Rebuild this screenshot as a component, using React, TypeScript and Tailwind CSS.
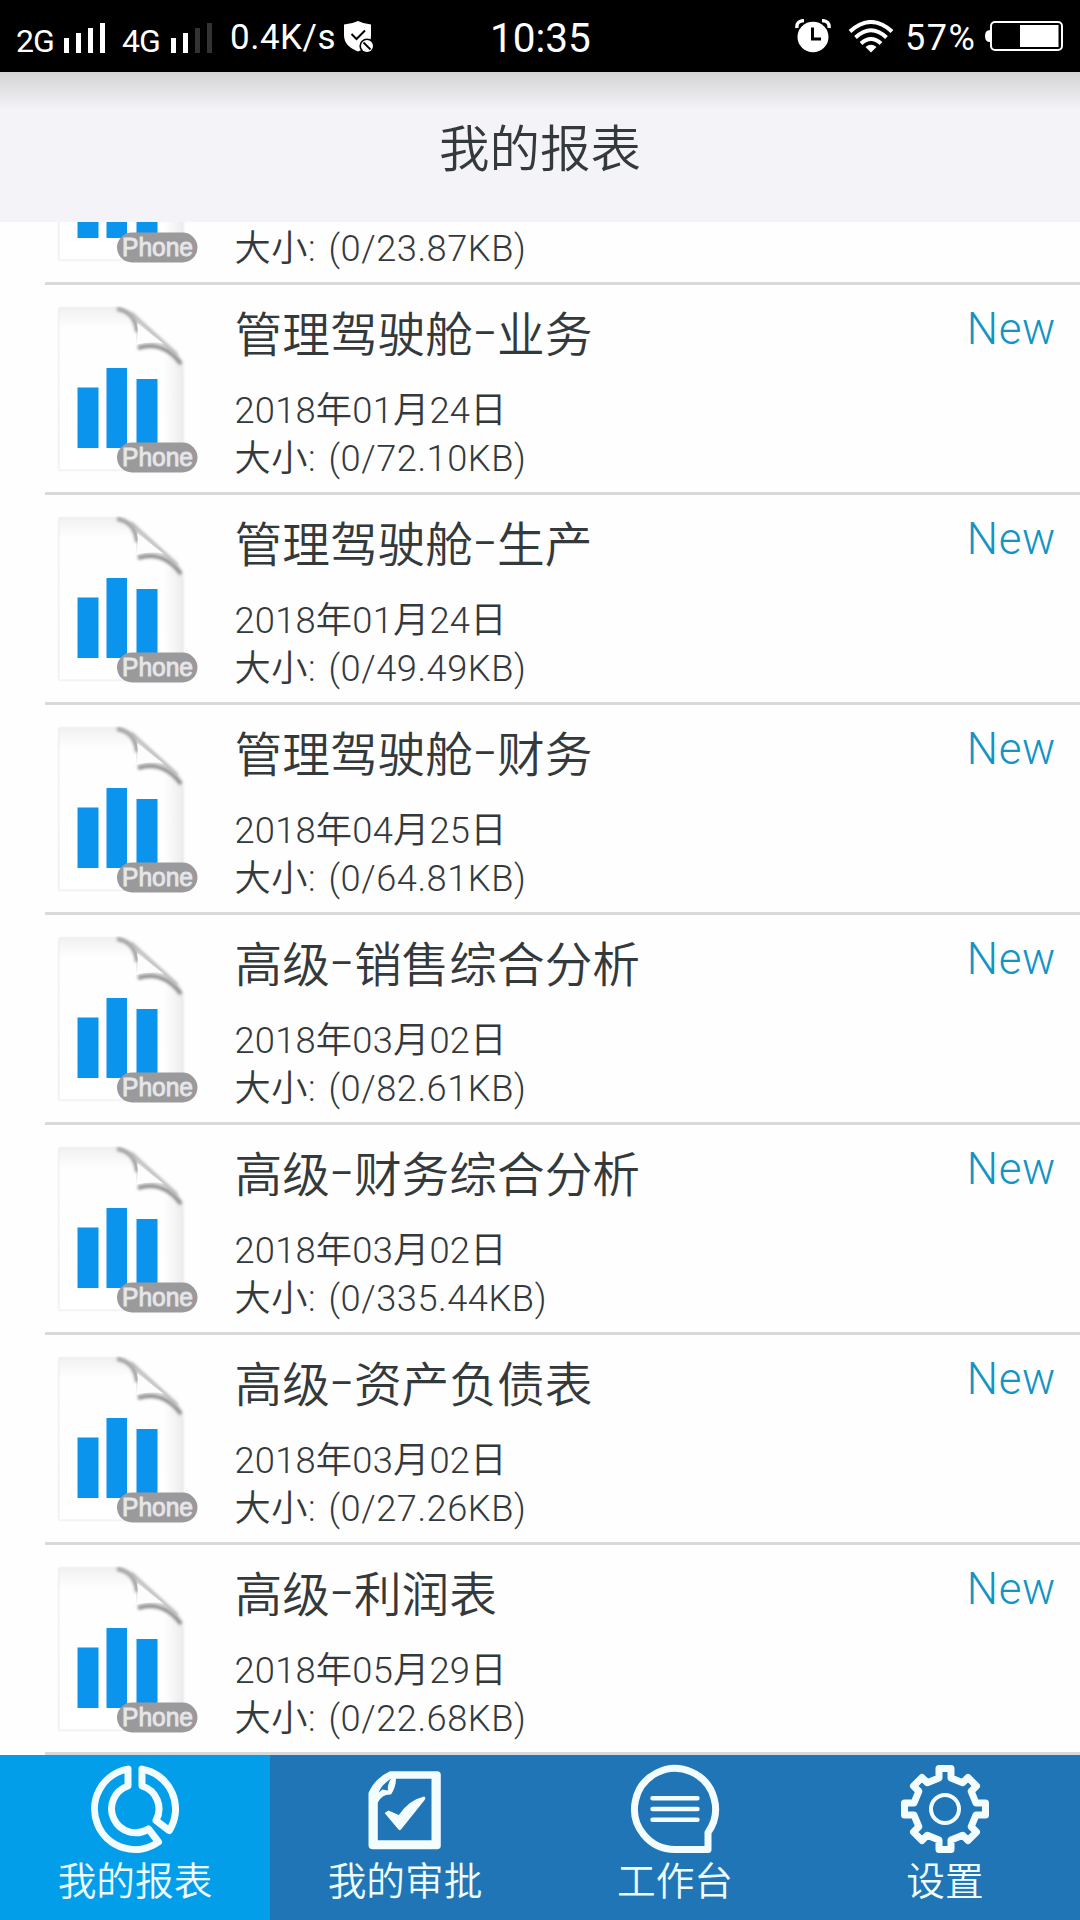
import type { ReactNode } from "react";

type Report = {
  group: string;
  title: string;
  date: string;
  size: string;
};

const reports: Report[] = [
  { group: "管理驾驶舱", title: "业务", date: "2018年01月24日", size: "72.10KB" },
  { group: "管理驾驶舱", title: "生产", date: "2018年01月24日", size: "49.49KB" },
  { group: "管理驾驶舱", title: "财务", date: "2018年04月25日", size: "64.81KB" },
  { group: "高级", title: "销售综合分析", date: "2018年03月02日", size: "82.61KB" },
  { group: "高级", title: "财务综合分析", date: "2018年03月02日", size: "335.44KB" },
  { group: "高级", title: "资产负债表", date: "2018年03月02日", size: "27.26KB" },
  { group: "高级", title: "利润表", date: "2018年05月29日", size: "22.68KB" },
];

function Signal({ level }: { level: number }) {
  const heights = ["h-[15px]", "h-5", "h-[25px]", "h-[30px]"];
  return (
    <div className="flex items-end gap-[7px]">
      {heights.map((h, i) => (
        <span key={h} className={`w-[5px] ${h} ${i < level ? "bg-white" : "bg-[#333]"}`} />
      ))}
    </div>
  );
}

function StatusBar() {
  return (
    <div className="flex h-[72px] shrink-0 items-start bg-black text-white">
      <div className="flex w-[490px] items-start pl-4">
        <span className="mt-[24px] w-12 text-[32px] leading-[34px] tracking-[-1px]">2G</span>
        <div className="mt-[23px]">
          <Signal level={4} />
        </div>
        <span className="mt-[24px] ml-[17px] w-[49px] text-[32px] leading-[34px] tracking-[-1px]">4G</span>
        <div className="mt-[23px]">
          <Signal level={2} />
        </div>
        <span className="mt-[20px] ml-[18px] w-[114px] text-[35px] leading-[36px] tracking-[0.5px]">0.4K/s</span>
        <svg className="mt-[21px]" width="30" height="32" viewBox="0 0 30 32">
          <path d="M0 3.5Q8 3 14 0Q20 3 27 3.5V15C27 23 20 28 14 30.5C5 27 0 22 0 14Z" fill="#fff" />
          <path d="M7.5 13L12.5 18L21 9.5" fill="none" stroke="#000" strokeWidth="2" />
          <circle cx="23" cy="25" r="7.6" fill="#000" />
          <circle cx="23" cy="25" r="6" fill="#fff" />
          <path d="M19.5 21.5L26.5 28.5" stroke="#000" strokeWidth="1.8" />
        </svg>
      </div>
      <span className="mt-[18px] w-[305px] text-[40.500px] leading-[40px]">10:35</span>
      <svg className="mt-[19px]" width="36" height="34" viewBox="0 0 36 34">
        <path d="M2 9Q1 2 9 1.5M34 9Q35 2 27 1.5" fill="none" stroke="#fff" strokeWidth="3.4" />
        <ellipse cx="18" cy="18" rx="15.5" ry="15.2" fill="#fff" />
        <path d="M17.5 8.500V20H26" fill="none" stroke="#000" strokeWidth="3" />
      </svg>
      <svg className="mt-5 ml-[17px]" width="46" height="33" viewBox="0 0 46 33">
        <g fill="none" stroke="#fff" strokeWidth="4">
          <path d="M2 11.5Q23 -7.5 44 11.5" />
          <path d="M7.5 17.5Q23 3 38.5 17.5" />
          <path d="M13 23.5Q23 14.5 33 23.5" />
        </g>
        <path d="M17.5 27Q23 22.5 28.5 27L23 32.5Z" fill="#fff" />
      </svg>
      <span className="mt-[20px] ml-[11px] w-[80px] text-[36px] leading-[36px] tracking-[1.500px]">57%</span>
      <svg className="mt-[21px]" width="78" height="30" viewBox="0 0 78 30">
        <path d="M5 9Q0 9 0 15T5 21Z" fill="#fff" />
        <rect x="6" y="1" width="71" height="28" rx="4" fill="#000" stroke="#fff" strokeWidth="2" />
        <rect x="35" y="4" width="38.5" height="22" fill="#fff" />
      </svg>
    </div>
  );
}

function ReportIcon() {
  return (
    <svg className="mt-[21px] shrink-0" width="144" height="170" viewBox="0 0 144 170">
      <defs>
        <linearGradient id="page" x1="0" y1="0" x2="0" y2="1">
          <stop offset="0" stopColor="#f1f1f1" />
          <stop offset="0.12" stopColor="#fefefe" />
          <stop offset="1" stopColor="#ffffff" />
        </linearGradient>
        <linearGradient id="side" x1="0" y1="0" x2="1" y2="0">
          <stop offset="0.85" stopColor="#e8e8ea" stopOpacity="0" />
          <stop offset="1" stopColor="#e6e6e8" stopOpacity="0.7" />
        </linearGradient>
        <filter id="soft" x="-20%" y="-20%" width="140%" height="140%">
          <feGaussianBlur stdDeviation="1.6" />
        </filter>
      </defs>
      <path d="M2 2H62C72 3 79 9 84 15L119 45Q127 54 127 66V164H2Z" fill="#cfcfcf" opacity="0.4" filter="url(#soft)" />
      <path d="M2 2H62C77 3 80 20 80 40C96 36 112 38 122 53Q125 58 125 66V164H2Z" fill="url(#page)" stroke="#ededee" />
      <path d="M80 40C96 36 112 38 122 53Q125 58 125 66V164H2V60H80Z" fill="url(#side)" />
      <path d="M60 3C73 5 79 14 80 26" fill="none" stroke="#a0a0a0" strokeWidth="4" filter="url(#soft)" />
      <path d="M81 42C94 38 110 39 124 58" fill="none" stroke="#8e8e8e" strokeWidth="4" filter="url(#soft)" />
      <path d="M74 7L120 49" fill="none" stroke="#b4b4b4" strokeWidth="3" filter="url(#soft)" />
      <path d="M80 17Q82 28 79 39C90 36 99 36 107 38Z" fill="#fdfdfd" />
      <g fill="#0a94ee">
        <rect x="20.500" y="81.500" width="21" height="60.500" />
        <rect x="49.500" y="62" width="20.500" height="80" />
        <rect x="79.500" y="73" width="21" height="69" />
      </g>
      <rect x="60" y="136.500" width="80.500" height="30" rx="15" fill="#9a9a9c" />
      <text x="65" y="160" fontSize="25" textLength="71" lengthAdjust="spacingAndGlyphs" fill="#e6e6e8" stroke="#e6e6e8" strokeWidth="0.9" className="font-['Liberation_Sans',sans-serif]">
        Phone
      </text>
    </svg>
  );
}

function FileSize({ size }: { size: string }) {
  return (
    <p className="text-[36.200px] leading-[48px] tracking-[0.550px] [word-spacing:3px]">大小: (0/{size})</p>
  );
}

function ReportRow({ report }: { report: Report }) {
  return (
    <div className="ml-[45px] flex h-[210px] shrink-0 border-b-[3px] border-[#d9d9dc] pr-6 pl-3">
      <ReportIcon />
      <div className="ml-[33.500px] flex-1 pt-[21px] font-[350] whitespace-nowrap text-[#34393c]">
        <h2 className="flex h-[60px] text-[47.700px] leading-[60px]">
          <span>{report.group}</span>
          <span className="w-6 text-center text-[36px] leading-[57px] font-normal">–</span>
          <span>{report.title}</span>
        </h2>
        <p className="mt-[21px] text-[36.300px] leading-[48px] tracking-[0.200px]">{report.date}</p>
        <FileSize size={report.size} />
      </div>
      <span className="mt-[19px] text-[44px] leading-[50px] font-light tracking-[0.700px] text-[#1394c4]">New</span>
    </div>
  );
}

// Tail of the row that has scrolled under the header
function ScrolledRow({ size }: { size: string }) {
  return (
    <div className="ml-[45px] flex h-[63px] shrink-0 items-end overflow-hidden border-b-[3px] border-[#d9d9dc] pl-3">
      <div className="flex h-[60px] w-36 shrink-0 flex-col justify-end overflow-hidden">
        <div className="h-[207px] shrink-0">
          <ReportIcon />
        </div>
      </div>
      <div className="ml-[33.500px] pb-[9px] font-[350] whitespace-nowrap text-[#34393c]">
        <FileSize size={size} />
      </div>
    </div>
  );
}

function Tab({ label, active, children }: { label: string; active?: boolean; children: ReactNode }) {
  return (
    <button className={`flex w-[270px] flex-col items-center pt-[9px] ${active ? "bg-[#029eea]" : "bg-[#1f75b6]"}`}>
      <svg width="90" height="90" viewBox="0 0 90 90" fill="none" stroke="#f3fdff" strokeWidth="7" strokeLinejoin="round">
        {children}
      </svg>
      <span className="mt-[3px] text-[38.700px] leading-[50px] font-[350] text-[#effdff]">{label}</span>
    </button>
  );
}

export default function App() {
  return (
    <div className="flex h-[1920px] w-[1080px] flex-col overflow-hidden bg-[#fefefe] font-[Roboto,'Noto_Sans_CJK_SC',sans-serif]">
      <StatusBar />
      <header className="flex h-[150px] shrink-0 justify-center bg-linear-to-b from-[#d4d4d4] via-[#f4f3f7] via-25% to-[#f4f3f7] pt-[48px]">
        <h1 className="text-[50.500px] leading-[60px] font-[350] text-[#34393c]">我的报表</h1>
      </header>
      <main className="flex h-[1533px] flex-col overflow-hidden">
        <ScrolledRow size="23.87KB" />
        {reports.map((report) => (
          <ReportRow key={report.group + report.title} report={report} />
        ))}
      </main>
      <nav className="flex h-[165px] shrink-0">
        <Tab label="我的报表" active>
          <path d="M38 5.100A40.500 40.500 0 1 0 68.500 78L58.500 65A24 24 0 1 1 38 22Z" />
          <path d="M52 5.100A40.500 40.500 0 0 1 79.300 66.600L66 56.500A24 24 0 0 0 52 22Z" />
        </Tab>
        <Tab label="我的审批">
          <path
            d="M30 7.300H77Q80.800 7.300 80.800 11V81.500Q80.800 85.300 77 85.300H13Q8.500 85.300 8.500 81V29Q15 14 30 7.300ZM36 14.700Q36 23 31 30.500Q22 30 17.800 38.500V76.300H71.500V14.700ZM31.500 14.500Q22 20 18.500 28.500L22.500 25.500L28 26.500Q27 20 31.500 14.500Z"
            fill="#f3fdff"
            fillRule="evenodd"
            stroke="none"
          />
          <path d="M24.600 49L28.500 46.500L38.800 51Q49 36 64 32.500Q66 33 65 35.500L41 65.500Q39.500 67 38 65Z" fill="#f3fdff" stroke="none" />
        </Tab>
        <Tab label="工作台">
          <path d="M78 85.500H45A40.500 40.500 0 1 1 78 68.500Z" />
          <path d="M22.500 34.300H67.500M22.500 45H67.500M22.500 55.700H67.500" strokeWidth="4.400" strokeLinecap="round" />
        </Tab>
        <Tab label="设置">
          <path d="M39 14V4.500H51V14L62.700 18.800L68 13.500L76.500 22L71.200 27.300L76 39H85.500V51H76L71.200 62.700L76.500 68L68 76.500L62.700 71.200L51 76V85.500H39V76L27.300 71.200L22 76.500L13.500 68L18.800 62.700L14 51H4.500V39H14L18.800 27.300L13.500 22L22 13.500L27.300 18.800Z" />
          <circle cx="45" cy="45" r="14" strokeWidth="4" />
        </Tab>
      </nav>
    </div>
  );
}
